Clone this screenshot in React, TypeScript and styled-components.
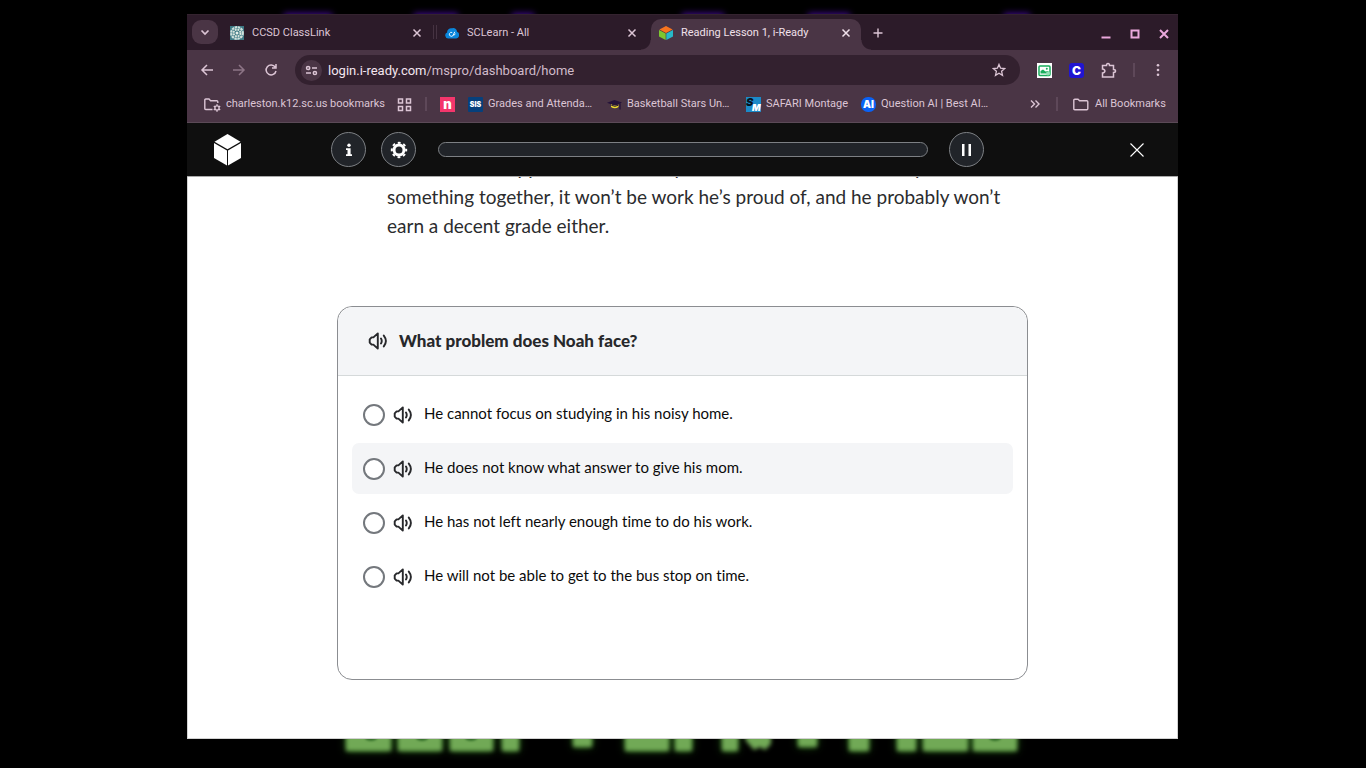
import React from "react";
import styled, { createGlobalStyle } from "styled-components";

const GlobalStyle = createGlobalStyle`
  *, *::before, *::after { box-sizing: border-box; }
  html, body { margin: 0; background: #000; }
  button, input { font: inherit; color: inherit; margin: 0; padding: 0; border: 0; background: none; }
  a { color: inherit; text-decoration: none; }
  svg { display: block; flex: none; }
`;

const UI_FONT = `Roboto, "Liberation Sans", sans-serif`;
const READ_FONT = `Lato, "Open Sans", sans-serif`;

const Desktop = styled.div`
  position: relative;
  min-height: 100vh;
  display: flex;
  padding: 14px 188px 29px 187px;
  background: #000;
  overflow: hidden;
`;

const Wallpaper = styled.svg<{ $edge: "top" | "bottom" }>`
  position: absolute;
  left: 0;
  width: 100%;
  height: 40px;
  ${(p) => (p.$edge === "top" ? "top: 0;" : "bottom: 0;")}
`;

const BrowserWindow = styled.div`
  position: relative;
  flex: 1;
  min-width: 0;
  display: flex;
  flex-direction: column;
  background: #4a3545;
`;

const TabStrip = styled.div`
  display: flex;
  height: 36px;
  padding: 0 7px 0 5px;
  background: #2c1b29;
  border-top: 1px solid #34232f;
  font: 11px/16px ${UI_FONT};
  color: #dcc5d5;
`;

const TabSearch = styled.button`
  width: 26px;
  height: 24px;
  margin: 5px 4px 0 0;
  border-radius: 9px;
  background: #4a3545;
  display: grid;
  place-items: center;
`;

const Tab = styled.div<{ $active?: boolean }>`
  position: relative;
  flex: 0 1 ${(p) => (p.$active ? 210 : 214)}px;
  min-width: 0;
  display: flex;
  align-items: center;
  gap: 8px;
  height: 31px;
  margin-top: 4px;
  padding: ${(p) => (p.$active ? "0 9px 3px 8px" : "0 13px 3px 8px")};
  border-radius: 10px 10px 0 0;
  ${(p) =>
    p.$active &&
    `background: #4a3545; color: #f0e0ea;
    &::before, &::after {
      content: ""; position: absolute; bottom: 0; width: 10px; height: 10px;
    }
    &::before { left: -10px; background: radial-gradient(circle at 0 0, transparent 9px, #4a3545 10px); }
    &::after { right: -10px; background: radial-gradient(circle at 100% 0, transparent 9px, #4a3545 10px); }`}
`;

const TabTitle = styled.span`
  flex: 1;
  white-space: nowrap;
  overflow: hidden;
`;

const TabDivider = styled.span`
  width: 4px;
  height: 14px;
  margin: 10px 0 0 -3px;
  border: solid #463342;
  border-width: 0 1px;
`;

const IconButton = styled.button<{ $w?: number; $dim?: boolean }>`
  width: ${(p) => p.$w ?? 12}px;
  flex: none;
  display: grid;
  place-items: center;
  ${(p) => p.$dim && "color: #8d7586;"}
`;

const WindowControls = styled.div`
  margin-left: auto;
  display: flex;
  gap: 15px;
  align-items: center;
  padding-top: 2px;
  color: #eaa8dc;
`;

const Toolbar = styled.div`
  display: flex;
  align-items: center;
  height: 40px;
  padding: 0 13px 0 12px;
  color: #dcc5d5;
`;

const NavButtons = styled.div`
  display: flex;
  gap: 16px;
  margin-right: 16px;
`;

const AddressBar = styled.div`
  flex: 1;
  display: flex;
  align-items: center;
  height: 30px;
  margin-right: 16px;
  padding: 0 14px 0 6px;
  border-radius: 15px;
  background: #33212f;
  font: 13px/16px ${UI_FONT};
`;

const SiteInfo = styled.button`
  width: 21px;
  height: 21px;
  margin-right: 6px;
  border-radius: 50%;
  background: #4a3545;
  display: grid;
  place-items: center;
`;

const AddressText = styled.span`
  flex: 1;
  padding-top: 1px;
  color: #d0bbca;
  b { font-weight: 400; color: #f3e6ef; }
`;

const Extensions = styled.div`
  display: flex;
  align-items: center;
  gap: 16px;
`;

const Divider = styled.span`
  width: 2px;
  height: 14px;
  background: #5e4859;
`;

const BookmarksBar = styled.nav`
  display: flex;
  align-items: center;
  height: 33px;
  padding: 0 12px 4px 17px;
  border-bottom: 1px solid #5b4a57;
  font: 11px/16px ${UI_FONT};
  color: #dcc5d5;
`;

const Bookmark = styled.a<{ $w?: number }>`
  display: flex;
  align-items: center;
  gap: 5px;
  margin-right: 13px;
  white-space: nowrap;
  span { width: ${(p) => (p.$w ? `${p.$w}px` : "auto")}; }
`;

const BookmarkGroup = styled.div<{ $end?: boolean }>`
  display: flex;
  align-items: center;
  margin-left: ${(p) => (p.$end ? "auto" : "13px")};
  gap: ${(p) => (p.$end ? 15 : 0)}px;
  ${(p) => p.$end && `& > a { margin-right: 0; }`}
`;

const LessonBar = styled.header`
  display: flex;
  align-items: center;
  height: 54px;
  padding: 0 33px 0 26px;
  background: #0f0f0f;
  border-bottom: 1px solid #a9a9a9;
  color: #fff;
`;

const RoundButton = styled.button`
  width: 35px;
  height: 35px;
  border: 1px solid #7d8084;
  border-radius: 50%;
  background: #212429;
  display: grid;
  place-items: center;
`;

const ToolGroup = styled.div`
  display: flex;
  gap: 15px;
  margin: 0 22px 0 89px;
`;

const Progress = styled.div`
  flex: 1;
  height: 15px;
  margin-right: 21px;
  border: 1px solid #7d8084;
  border-radius: 8px;
  background: #212429;
`;

const LessonClose = styled.button`
  margin-left: 145px;
`;

const Lesson = styled.main`
  flex: 1;
  background: #fff;
  border: solid #d2d2d2;
  border-width: 0 1px 1px;
  padding: 0 149px 58px;
  overflow: hidden;
  font-family: ${READ_FONT};
  font-variant-ligatures: none;
`;

const Passage = styled.p`
  margin: -24px 0 66px;
  padding: 0 20px 0 50px;
  font-size: 19px;
  line-height: 29px;
  color: #2b2c2e;
`;

const Line = styled.span`
  display: block;
  white-space: nowrap;
`;

const Card = styled.fieldset`
  margin: 0;
  padding: 0;
  min-width: 0;
  min-height: 374px;
  border: 1px solid #8b8d91;
  border-radius: 15px;
  overflow: hidden;
`;

const Question = styled.div`
  display: flex;
  align-items: center;
  gap: 11px;
  height: 69px;
  padding-left: 30px;
  background: #f4f5f7;
  border-bottom: 1px solid #d5d9da;
  color: #27282b;
  h2 { margin: 0; font-size: 17px; line-height: 24px; font-weight: 900; }
`;

const Options = styled.div`
  display: grid;
  gap: 3px;
  padding: 13px 14px;
`;

const Option = styled.div<{ $hover?: boolean }>`
  display: flex;
  align-items: center;
  height: 51px;
  padding-left: 11px;
  border-radius: 7px;
  background: ${(p) => (p.$hover ? "#f4f5f7" : "transparent")};
  color: #27282b;
  label { margin-left: 11px; padding-bottom: 3px; font-size: 15px; line-height: 20px; color: #0b0b0b; }
`;

const Radio = styled.input`
  appearance: none;
  width: 22px;
  height: 22px;
  margin-right: 8px;
  border: 2px solid #74787d;
  border-radius: 50%;
  background: #fff;
`;

const Stroke = ({ s = 14, w = 1.5, d }: { s?: number; w?: number; d: string }) => (
  <svg width={s} height={s} viewBox={`0 0 ${s} ${s}`} fill="none" stroke="currentColor" strokeWidth={w}>
    <path d={d} />
  </svg>
);

const CloseIcon = () => <Stroke s={12} w={1.5} d="M2.5 2.5l7 7M9.5 2.5l-7 7" />;

const Speaker = () => (
  <svg width="20" height="20" viewBox="0 0 20 20" fill="none" stroke="currentColor" strokeWidth="1.9" strokeLinejoin="round" strokeLinecap="round">
    <path d="M9.8 2.4v15.2L5.4 13.6H3.6L1.7 11.6V8.4L3.6 6.4h1.8z" />
    <path d="M13 7.6q1.5 2.4 0 4.800M15.800 4.600q4.200 5.400 0 10.800" />
  </svg>
);

const Folder = ({ gear }: { gear?: boolean }) => (
  <svg width="17" height="15" viewBox="0 0 17 15" fill="none" stroke="currentColor" strokeWidth="1.4">
    {gear ? (
      <>
        <path d="M8.5 12.5H1.8Q.8 12.5.8 11.5V3Q.8 2 1.8 2H5l1.6 1.7h6.2q1 0 1 1V6" />
        <circle cx="13" cy="11" r="2.1" />
        <path d="M13 7.3v1.4M13 13.3v1.4M9.8 9.2l1.2.7M15 12.1l1.2.7M9.8 12.8l1.2-.7M15 9.9l1.2-.7" />
      </>
    ) : (
      <path d="M1.8 2.2H5l1.6 1.6h7.2q1 0 1 1v6.9q0 1-1 1H1.8q-1 0-1-1V3.2q0-1 1-1z" />
    )}
  </svg>
);

const ClassLinkLogo = () => (
  <svg width="14" height="14" viewBox="0 0 14 14">
    <rect width="14" height="14" fill="#3d7884" />
    <circle cx="7" cy="7" r="5.8" fill="none" stroke="#cfe0dc" strokeWidth="2.2" strokeDasharray="2.4 .64" />
    <circle cx="7" cy="7" r="3.4" fill="none" stroke="#dfe9e0" strokeWidth="1.8" strokeDasharray="1.9 .77" />
    <circle cx="7" cy="7" r="1.5" fill="#e6efe9" />
  </svg>
);

const CloudLogo = () => (
  <svg width="14" height="14" viewBox="0 0 14 14">
    <path d="M3.3 12.5A3.2 3.2 0 0 1 2.1 6.4 4 4 0 0 1 7 2.3a3.6 3.6 0 0 1 5 3.5 3.5 3.5 0 0 1-.8 6.7z" fill="#0a86dc" />
    <path d="M7.2 6.5a2 2 0 1 0 .8 3L9.8 5.8M8.2 9.2q1.6.2 2-1.6" stroke="#e8f6ff" strokeWidth="1" fill="none" />
  </svg>
);

const ColorCube = () => (
  <svg width="14" height="14" viewBox="0 0 14 14">
    <path d="M7 0l6.6 3.5L7 7 .4 3.5z" fill="#f8741f" />
    <path d="M0 4l6.7 3.4V14L0 10.6z" fill="#7cc62f" />
    <path d="M14 4L7.3 7.4V14L14 10.6z" fill="#27b9c9" />
  </svg>
);

const Badge = ({ bg, text, size, round }: { bg: string; text: string; size: number; round?: number }) => (
  <svg width="15" height="15" viewBox="0 0 15 15" overflow="visible">
    <rect width="15" height="15" rx={round ?? 0} fill={bg} />
    <text x="7.5" y={7.5 + size * 0.36} fontSize={size} fontWeight="900" textAnchor="middle" fill="#fff" fontFamily="Inter, sans-serif">
      {text}
    </text>
  </svg>
);

const GradCap = () => (
  <svg width="15" height="15" viewBox="0 0 15 15">
    <path d="M0 5.8L7.5 3 15 5.6 8.5 9z" fill="#24123a" />
    <path d="M4 7.2q4.2 2.4 7.5.2V10q-3.6 2.6-7.5 0z" fill="#efdc2c" />
    <path d="M4.3 8.3q3.7 2 7 0" stroke="#24123a" fill="none" />
    <path d="M13 6.4v6" stroke="#24123a" strokeWidth="1.3" />
  </svg>
);

const Safari = () => (
  <svg width="15" height="15" viewBox="0 0 15 15" overflow="visible" fontFamily="Inter, sans-serif" fontWeight="900" fontStyle="italic">
    <rect width="15" height="15" fill="#1b8ac8" />
    <text x="0" y="9" fontSize="11" fill="#06121c">S</text>
    <text x="6" y="14" fontSize="9" fill="#fff">M</text>
  </svg>
);

const glows: [number, number][] = [[284, 48], [414, 44], [512, 22], [682, 42], [808, 42], [1004, 26]];
const greenBlocks: [number, number, number][] = [
  [346, 45, 12], [398, 44, 12], [450, 43, 12], [502, 17, 12], [573, 19, 8], [625, 44, 12], [675, 17, 12],
  [722, 16, 12], [798, 19, 8], [849, 20, 12], [897, 19, 12], [923, 45, 12], [973, 44, 12],
];

const answers = [
  "He cannot focus on studying in his noisy home.",
  "He does not know what answer to give his mom.",
  "He has not left nearly enough time to do his work.",
  "He will not be able to get to the bus stop on time.",
];

export default function App() {
  return (
    <Desktop>
      <GlobalStyle />
      <Wallpaper $edge="top" viewBox="0 0 1366 40" preserveAspectRatio="xMidYMin slice" aria-hidden="true">
        <g fill="#3f0a8c" style={{ filter: "blur(3px)" }}>
          {glows.map(([x, w]) => <rect key={x} x={x} y="13" width={w} height="16" />)}
        </g>
      </Wallpaper>
      <Wallpaper $edge="bottom" viewBox="0 0 1366 40" preserveAspectRatio="xMidYMax slice" aria-hidden="true">
        <g fill="#1f5a12" style={{ filter: "blur(4px)" }}>
          {greenBlocks.map(([x, w, h]) => <rect key={x} x={x} y="0" width={w} height={h + 11} />)}
        </g>
        <g fill="#71a956" style={{ filter: "blur(2px)" }}>
          {greenBlocks.map(([x, w, h]) => <rect key={x} x={x} y="0" width={w} height={h + 11} />)}
          <path d="M743 0h28v16l-6 6-5-3-6 3-8-9z" />
        </g>
        <g fill="#35702a" style={{ filter: "blur(1px)" }}>
          {[371, 422, 471, 995].map((x) => <ellipse key={x} cx={x} cy="10" rx="6" ry="3" />)}
        </g>
      </Wallpaper>

      <BrowserWindow>
        <TabStrip>
          <TabSearch aria-label="Search tabs"><Stroke s={10} w={1.7} d="M1.5 3.5L5 7l3.5-3.5" /></TabSearch>
          <Tab>
            <ClassLinkLogo /><TabTitle>CCSD ClassLink</TabTitle>
            <IconButton aria-label="Close tab"><CloseIcon /></IconButton>
          </Tab>
          <TabDivider />
          <Tab>
            <CloudLogo /><TabTitle>SCLearn - All</TabTitle>
            <IconButton aria-label="Close tab"><CloseIcon /></IconButton>
          </Tab>
          <Tab $active>
            <ColorCube /><TabTitle>Reading Lesson 1, i-Ready</TabTitle>
            <IconButton aria-label="Close tab"><CloseIcon /></IconButton>
          </Tab>
          <IconButton $w={34} aria-label="New tab"><Stroke s={12} w={1.4} d="M6 1.5v9M1.5 6h9" /></IconButton>
          <WindowControls>
            <IconButton $w={14} aria-label="Minimize"><Stroke w={2} d="M2.5 10.5h9" /></IconButton>
            <IconButton $w={14} aria-label="Maximize"><Stroke w={2} d="M3.5 3.5h7v7h-7z" /></IconButton>
            <IconButton $w={14} aria-label="Close window"><Stroke w={2} d="M3 3l8 8M11 3l-8 8" /></IconButton>
          </WindowControls>
        </TabStrip>

        <Toolbar>
          <NavButtons>
            <IconButton $w={16} aria-label="Back"><Stroke s={16} d="M14 8H3M8 3L3 8l5 5" /></IconButton>
            <IconButton $w={16} $dim aria-label="Forward"><Stroke s={16} d="M2 8h11M8 3l5 5-5 5" /></IconButton>
            <IconButton $w={16} aria-label="Reload"><Stroke s={16} d="M12.2 5A5 5 0 1 0 13 9M13 2v4H9" /></IconButton>
          </NavButtons>
          <AddressBar>
            <SiteInfo aria-label="Site information">
              <Stroke s={13} w={1.5} d="M4.7 4a1.6 1.6 0 1 1-3.2 0 1.6 1.6 0 0 1 3.2 0M7 4h5M11.5 9a1.6 1.6 0 1 1-3.2 0 1.6 1.6 0 0 1 3.2 0M1 9h5" />
            </SiteInfo>
            <AddressText><b>login.i-ready.com</b>/mspro/dashboard/home</AddressText>
            <IconButton $w={14} aria-label="Bookmark this page">
              <Stroke s={14} w={1.3} d="M7 1.4l1.6 3.8 4.1.4-3.1 2.7.9 4L7 10.2l-3.5 2.1.9-4L1.3 5.6l4.1-.4z" />
            </IconButton>
          </AddressBar>
          <Extensions>
            <IconButton $w={16} aria-label="Picture extension">
              <svg width="15" height="15" viewBox="0 0 15 15">
                <rect width="15" height="15" fill="#fff" />
                <rect x="2" y="3" width="11" height="9.5" rx="1" fill="#fff" stroke="#19ad5c" strokeWidth="1.5" />
                <path d="M3.5 10.5V8L6 6.5l2.5 2 3-.5v2.5z" fill="#19ad5c" />
                <circle cx="9.8" cy="5.8" r="1" fill="#19ad5c" /><circle cx="11" cy="10.5" r="2" fill="#8fe0b2" />
              </svg>
            </IconButton>
            <IconButton $w={16} aria-label="C extension"><Badge bg="#2015d2" text="C" size={12} round={3} /></IconButton>
            <IconButton $w={17} aria-label="Extensions">
              <Stroke s={17} w={1.5} d="M2.5 3.5h4q0-2 1.5-2t1.5 2h4v4q2 0 2 1.5t-2 1.5v4.5h-11v-4q2.4-.3 2.4-2t-2.4-2z" />
            </IconButton>
            <Divider />
            <IconButton $w={14} aria-label="Menu">
              <svg width="14" height="14" viewBox="0 0 14 14" fill="currentColor"><circle cx="7" cy="2.2" r="1.3" /><circle cx="7" cy="7" r="1.3" /><circle cx="7" cy="11.8" r="1.3" /></svg>
            </IconButton>
          </Extensions>
        </Toolbar>

        <BookmarksBar>
          <Bookmark href="#" $w={158}><Folder gear /><span>charleston.k12.sc.us bookmarks</span></Bookmark>
          <Bookmark href="#" aria-label="Apps"><Stroke s={15} w={1.5} d="M1.5 2h4v4h-4zM9.5 2h4v4h-4zM1.5 9.5h4v4h-4zM9.5 9.5h4v4h-4z" /></Bookmark>
          <Divider />
          <BookmarkGroup>
            <Bookmark href="#" aria-label="Nearpod"><Badge bg="#f4366c" text="n" size={13} /></Bookmark>
            <Bookmark href="#" $w={106}><Badge bg="#06407c" text="SIS" size={7} round={1} /><span>Grades and Attenda…</span></Bookmark>
            <Bookmark href="#" $w={106}><GradCap /><span>Basketball Stars Un…</span></Bookmark>
            <Bookmark href="#" $w={82}><Safari /><span>SAFARI Montage</span></Bookmark>
            <Bookmark href="#" $w={106}><Badge bg="#0a62f5" text="AI" size={10} round={7} /><span>Question AI | Best AI…</span></Bookmark>
          </BookmarkGroup>
          <BookmarkGroup $end>
            <IconButton $w={12} aria-label="More bookmarks"><Stroke s={12} w={1.4} d="M2 2.5L5.5 6 2 9.5M6.5 2.5L10 6l-3.5 3.5" /></IconButton>
            <Divider />
            <Bookmark href="#" $w={71}><Folder /><span>All Bookmarks</span></Bookmark>
          </BookmarkGroup>
        </BookmarksBar>

        <LessonBar>
          <svg width="29" height="32" viewBox="0 0 29 32" fill="#fff">
            <path d="M14.5 0L27.5 7.7 14.5 15.3 1.5 7.7z" />
            <path d="M1 9l13 7.5V31.5L1 24z" /><path d="M28 9l-13 7.5V31.5L28 24z" />
          </svg>
          <ToolGroup>
            <RoundButton aria-label="Information">
              <svg width="14" height="16" viewBox="0 0 14 16" fill="#fff"><circle cx="7" cy="3.2" r="1.7" /><path d="M4 6.2h4.6v6H10V14H4v-1.8h1.5V8H4z" /></svg>
            </RoundButton>
            <RoundButton aria-label="Settings">
              <svg width="18" height="18" viewBox="0 0 18 18" fill="none" stroke="#fff">
                <circle cx="9" cy="9" r="5" strokeWidth="3" />
                <circle cx="9" cy="9" r="7.2" strokeWidth="2" strokeDasharray="2.8 2.85" strokeDashoffset="1.4" />
              </svg>
            </RoundButton>
          </ToolGroup>
          <Progress role="progressbar" aria-label="Lesson progress" aria-valuenow={0} />
          <RoundButton aria-label="Pause">
            <svg width="14" height="14" viewBox="0 0 14 14" fill="#fff"><path d="M2 1h2.5v12H2zM8.500 1H11v12H8.500z" /></svg>
          </RoundButton>
          <LessonClose aria-label="Close lesson"><Stroke s={16} w={1.1} d="M1.5 1.5l13 13M14.5 1.5l-13 13" /></LessonClose>
        </LessonBar>

        <Lesson>
          <Passage>
            <Line>Dad will be disappointed. Definitely even if Noah chooses to slap</Line>
            <Line>something together, it won’t be work he’s proud of, and he probably won’t</Line>
            <Line>earn a decent grade either.</Line>
          </Passage>
          <Card aria-labelledby="question">
            <Question>
              <IconButton $w={20} aria-label="Read question"><Speaker /></IconButton>
              <h2 id="question">What problem does Noah face?</h2>
            </Question>
            <Options>
              {answers.map((a, i) => (
                <Option key={a} $hover={i === 1}>
                  <Radio type="radio" name="answer" id={`answer-${i}`} />
                  <IconButton $w={20} aria-label="Read answer"><Speaker /></IconButton>
                  <label htmlFor={`answer-${i}`}>{a}</label>
                </Option>
              ))}
            </Options>
          </Card>
        </Lesson>
      </BrowserWindow>
    </Desktop>
  );
}
